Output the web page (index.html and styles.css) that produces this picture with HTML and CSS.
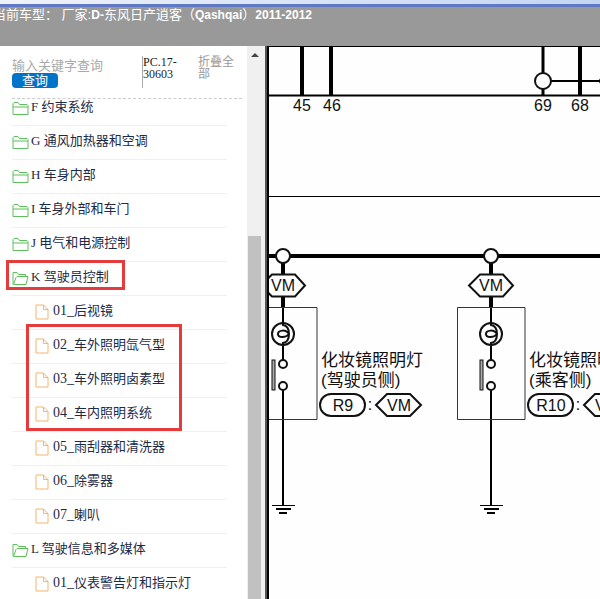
FILE: index.html
```html
<!DOCTYPE html>
<html lang="zh-CN">
<head>
    <meta charset="UTF-8">
    <meta name="viewport" content="width=device-width, initial-scale=1.0">
    <title>电路图</title>
    <link rel="stylesheet" href="styles.css">
</head>
<body>
<!-- Общие иконки -->
<svg class="icons" aria-hidden="true">
    <symbol id="folder" viewBox="0 0 17 15">
        <path d="M1 13.500V2.500L2 1.500H6L7.500 3.500H15L16 4.500V13.500z M1 6H16"/>
    </symbol>
    <symbol id="folder-open" viewBox="0 0 17 15">
        <path d="M1 13.500V1.500H5L6.500 3.500H13.500V5.500 M1.500 13.500L4 6.500L5 5.500H16L14 13.500z"/>
    </symbol>
    <symbol id="file" viewBox="0 0 14 16">
        <path d="M1 1h7.500L13 5.500V15H1z M8.500 1v4.500H13"/>
    </symbol>
</svg>

<div class="top-strip"></div>
<header class="title-bar">
    <div class="title">当前车型： 厂家:<b>D-</b>东风日产逍客（<b>Qashqai</b>）<b>2011-2012</b></div>
</header>

<div class="main">
    <aside class="sidebar">
        <div class="panel">
            <form class="toolbar">
                <div class="search">
                    <input type="text" class="search-input" aria-label="关键字" placeholder="输入关键字查询">
                    <button type="button" class="search-btn">查询</button>
                </div>
                <div class="doc-code">PC.17-30603</div>
                <a href="#" class="collapse">折叠全部</a>
            </form>
            <div class="tree">
                <ul>
                    <li><a href="#"><svg class="folder"><use href="#folder"/></svg>F 约束系统</a></li>
                    <li><a href="#"><svg class="folder"><use href="#folder"/></svg>G 通风加热器和空调</a></li>
                    <li><a href="#"><svg class="folder"><use href="#folder"/></svg>H 车身内部</a></li>
                    <li><a href="#"><svg class="folder"><use href="#folder"/></svg>I 车身外部和车门</a></li>
                    <li><a href="#"><svg class="folder"><use href="#folder"/></svg>J 电气和电源控制</a></li>
                    <li class="marked"><a href="#"><svg class="folder"><use href="#folder-open"/></svg>K 驾驶员控制</a>
                        <span class="mark mark-folder"></span>
                    </li>
                    <li class="child"><a href="#"><svg class="file"><use href="#file"/></svg><span class="num">01_</span>后视镜</a></li>
                    <li class="child marked"><a href="#"><svg class="file"><use href="#file"/></svg><span class="num">02_</span>车外照明氙气型</a>
                        <span class="mark mark-files"></span>
                    </li>
                    <li class="child"><a href="#"><svg class="file"><use href="#file"/></svg><span class="num">03_</span>车外照明卤素型</a></li>
                    <li class="child"><a href="#"><svg class="file"><use href="#file"/></svg><span class="num">04_</span>车内照明系统</a></li>
                    <li class="child"><a href="#"><svg class="file"><use href="#file"/></svg><span class="num">05_</span>雨刮器和清洗器</a></li>
                    <li class="child"><a href="#"><svg class="file"><use href="#file"/></svg><span class="num">06_</span>除雾器</a></li>
                    <li class="child"><a href="#"><svg class="file"><use href="#file"/></svg><span class="num">07_</span>喇叭</a></li>
                    <li><a href="#"><svg class="folder"><use href="#folder-open"/></svg>L 驾驶信息和多媒体</a></li>
                    <li class="child"><a href="#"><svg class="file"><use href="#file"/></svg><span class="num">01_</span>仪表警告灯和指示灯</a></li>
                </ul>
            </div>
        </div>
        <div class="scrollbar">
            <div class="scroll-arrow"></div>
            <div class="scroll-thumb"></div>
        </div>
    </aside>

    <main class="diagram">
        <!-- Схема: зеркальная подсветка -->
        <svg width="480" height="620" viewBox="269 47 480 620">
            <defs>
                <g id="lamp">
                    <path class="wire" d="M0 262V308" stroke-width="4"/>
                    <path class="wire" d="M0 308V324 M0 344V360 M0 390V505" stroke-width="2"/>
                    <circle class="shape" cx="0" cy="256" r="7"/>
                    <path class="shape" d="M-22 285.500L-11 274.500H12L22 285.500L12 296.500H-11z"/>
                    <path class="box" d="M-33.500 307.500H34V419.500H-33.500z"/>
                    <circle class="line" cx="0" cy="334" r="11"/>
                    <path class="line" d="M0 323V325Q6 326 6 334Q6 342 0 343V345 M6 334C3 329-5 330-5 334S3 338 6 334"/>
                    <circle class="shape" cx="0" cy="364" r="4"/>
                    <circle class="shape" cx="0" cy="386" r="4"/>
                    <rect class="switch" x="-11" y="360" width="3" height="30"/>
                    <path class="wire" d="M-11 505.500H12" stroke-width="1"/>
                    <path class="wire" d="M-7 509H8" stroke-width="2"/>
                    <path class="wire" d="M-4 513H4" stroke-width="2"/>
                    <text class="tag" x="0" y="291">VM</text>
                </g>
            </defs>
            <path class="wire" d="M302 47V95 M331 47V95 M580 47V95" stroke-width="4"/>
            <path class="wire" d="M543 47V95" stroke-width="3"/>
            <path class="wire" d="M269 95.500H749 M550 81H749" stroke-width="2"/>
            <circle class="shape" cx="543" cy="81" r="8"/>
            <circle cx="602" cy="81" r="3"/>
            <path class="wire" d="M269 196.500H749" stroke-width="1"/>
            <path class="wire" d="M269 256H749" stroke-width="4"/>
            <text class="pin" x="302" y="111">45</text>
            <text class="pin" x="332" y="111">46</text>
            <text class="pin" x="543" y="111">69</text>
            <text class="pin" x="580" y="111">68</text>

            <use href="#lamp" x="283"/>
            <use href="#lamp" x="491"/>

            <text class="name" x="321" y="366">化妆镜照明灯</text>
            <text class="name" x="321" y="386">(驾驶员侧)</text>
            <rect class="shape" x="320" y="394" width="45" height="22" rx="11"/>
            <text class="tag" x="343" y="411">R9</text>
            <text class="tag" x="370" y="410">:</text>
            <path class="shape" d="M376 405L387 394H410L421 405L410 416H387z"/>
            <text class="tag" x="399" y="411">VM</text>

            <text class="name" x="529" y="366">化妆镜照明灯</text>
            <text class="name" x="529" y="386">(乘客侧)</text>
            <rect class="shape" x="528" y="394" width="45" height="22" rx="11"/>
            <text class="tag" x="551" y="411">R10</text>
            <text class="tag" x="578" y="410">:</text>
            <path class="shape" d="M584 405L595 394H618L629 405L618 416H595z"/>
            <text class="tag" x="607" y="411">VM</text>
        </svg>
    </main>
</div>
</body>
</html>
```
FILE: styles.css
```css
/* Общие стили */
* { box-sizing: border-box; }

body {
    margin: 0;
    height: 100vh;
    display: flex;
    flex-direction: column;
    overflow: hidden;
    background-color: #fff;
    font-family: "Liberation Serif", "Noto Sans CJK SC", serif;
    font-size: 13px;
}

a { color: inherit; text-decoration: none; }

.icons { position: absolute; width: 0; height: 0; }

/* Шапка */
.top-strip {
    flex: none;
    height: 7px;
    background: linear-gradient(to right, #eef2fb, #c4d5f3);
    border-bottom: 3px solid #6079c4;
}

.title-bar {
    flex: none;
    height: 39px;
    background-color: #999;
    color: #fff;
    overflow: hidden;
}

.title {
    margin-left: -7px;
    line-height: 16px;
    white-space: nowrap;
    font-family: "Liberation Sans", "Noto Sans CJK SC", sans-serif;
}

.title b { font-size: 12px; }

.main {
    flex: 1;
    min-height: 0;
    display: flex;
}

/* Левая панель */
.sidebar {
    flex: none;
    width: 267px;
    display: flex;
    border-right: 2px solid #555;
}

.panel {
    flex: 1;
    display: flex;
    flex-direction: column;
    padding: 0 5px 0 12px;
}

.toolbar {
    flex: none;
    display: flex;
    height: 53px;
    padding-top: 10px;
    border-bottom: 1px dashed #ccc;
    line-height: 12px;
}

.search {
    width: 130px;
    padding-top: 3px;
}

.search-input {
    display: block;
    width: 100%;
    height: 14px;
    padding: 0;
    border: none;
    outline: none;
    background: none;
    font: inherit;
    font-size: 13px;
}

.search-input::placeholder { color: #aaa; }

.search-btn {
    display: block;
    width: 46px;
    height: 15px;
    padding: 0;
    border: none;
    border-radius: 4px;
    background-color: #0074c8;
    color: #fff;
    font-family: inherit;
    font-size: 13px;
    line-height: 14px;
}

.doc-code {
    width: 36px;
    height: 32px;
    border-left: 1px solid #aaa;
    font-size: 12px;
    color: #222;
}

.collapse {
    width: 40px;
    margin-left: 20px;
    font-size: 12px;
    color: #999;
}

/* Дерево разделов */
.tree {
    flex: 1;
    min-height: 0;
    overflow: hidden;
    margin-left: -12px;
    padding-left: 12px;
}

.tree ul {
    list-style: none;
    margin: -7px 15px 0 0;
    padding: 0;
}

.tree li {
    height: 34px;
    border-bottom: 1px solid #f0f0f0;
}

.tree li a {
    display: block;
    height: 33px;
    line-height: 30px;
    white-space: nowrap;
    color: #1c2b48;
}

.tree .child a { padding-left: 23px; }

.num { font-size: 14px; }

.folder, .file {
    vertical-align: middle;
    fill: none;
}

.folder {
    width: 17px;
    height: 15px;
    margin-right: 2px;
    stroke: #5cc05c;
}

.file {
    width: 14px;
    height: 16px;
    margin-right: 4px;
    stroke: #f5b56c;
}

/* Красные рамки */
.marked { position: relative; }

.mark {
    position: absolute;
    z-index: 1;
    border: 3px solid #e43c3c;
    pointer-events: none;
}

.mark-folder { left: -6px; top: -2px; width: 119px; height: 30px; }
.mark-files { left: 14px; top: -6px; width: 156px; height: 107px; }

/* Полоса прокрутки */
.scrollbar {
    width: 18px;
    display: flex;
    flex-direction: column;
    align-items: center;
    padding-right: 3px;
    background-color: #f0f0f0;
}

.scroll-arrow {
    margin-top: 7px;
    border: 4px solid transparent;
    border-top: none;
    border-bottom-color: #444;
}

.scroll-thumb {
    width: 13px;
    flex: 1;
    margin-top: 179px;
    background-color: #c1c1c1;
}

/* Схема */
.diagram {
    flex: 1;
    min-width: 0;
    overflow: hidden;
    border-left: 2px solid #000;
    border-top: 1px solid #000;
    background-color: #fefefe;
}

.diagram svg { display: block; }

.wire { fill: none; stroke: #000; }
.line { fill: none; stroke: #111; stroke-width: 2; }
.shape { fill: #fefefe; stroke: #111; stroke-width: 2; }
.box { fill: none; stroke: #333; stroke-width: 1; }
.switch { fill: #aaa; stroke: #111; }

.pin, .tag {
    font-family: "Liberation Sans", sans-serif;
    font-size: 16px;
    text-anchor: middle;
    fill: #111;
}

.name {
    font-family: "Liberation Sans", "Noto Sans CJK SC", sans-serif;
    font-size: 17px;
    fill: #111;
}
```
